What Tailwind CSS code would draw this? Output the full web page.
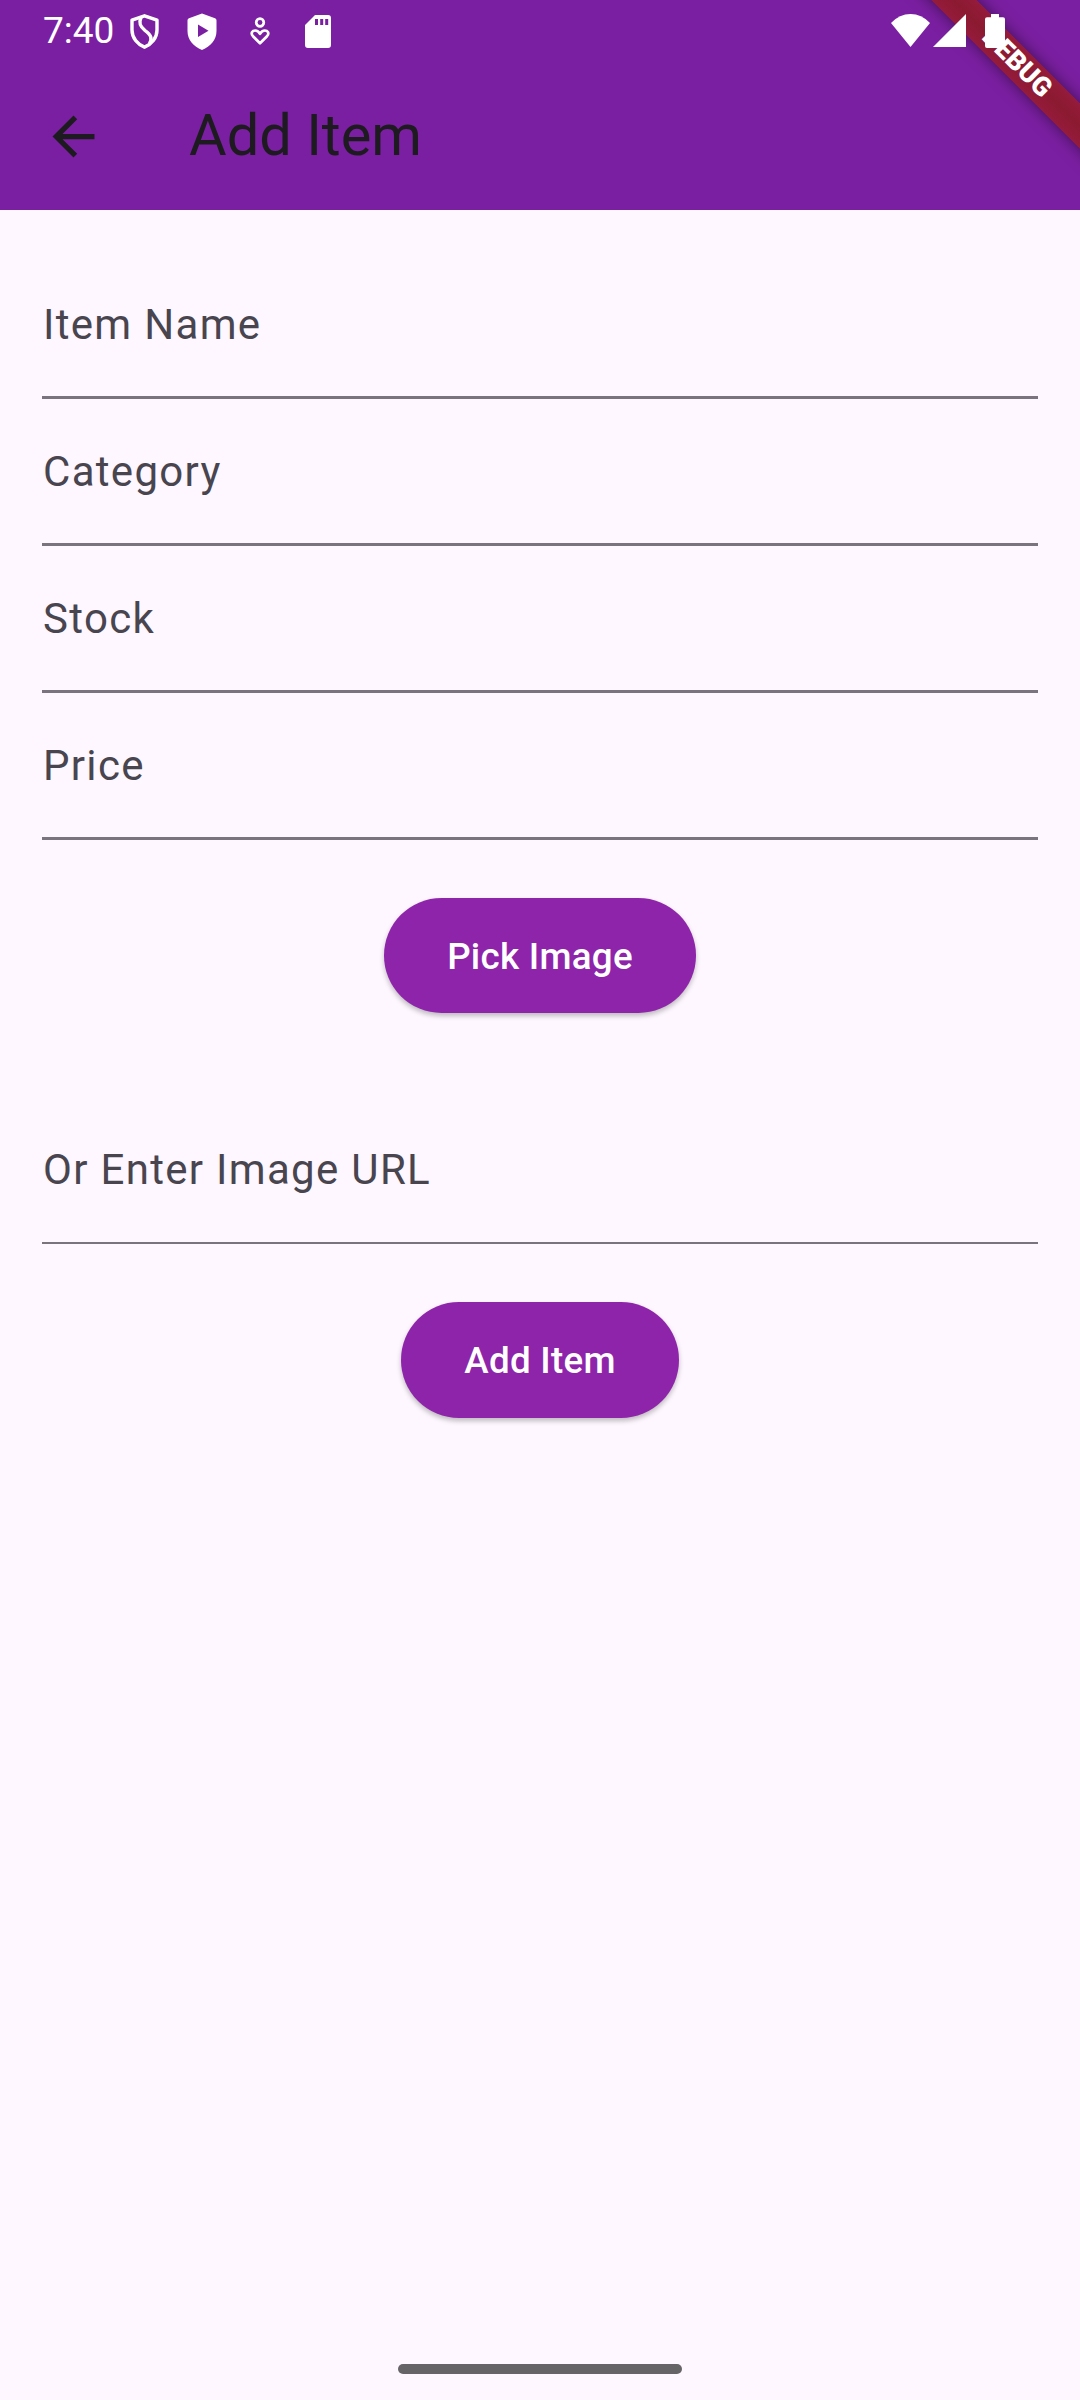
<!DOCTYPE html>
<html lang="en">
<head>
<meta charset="utf-8">
<title>Add Item</title>
<script src="https://cdn.jsdelivr.net/npm/@tailwindcss/browser@4"></script>
</head>
<body class="bg-[#fef7ff]">
<div class="relative flex h-[2400px] w-[1080px] flex-col overflow-hidden bg-[#fef7ff] font-['Roboto',sans-serif]">
  <header class="relative h-[210px] overflow-hidden bg-[#7b1fa2]">
    <!-- debug ribbon -->
    <div class="absolute left-[817.25px] top-[47px] flex h-[31.5px] w-[400px] rotate-45 items-center justify-center bg-linear-to-b from-[#951b3c] via-[#8b1a30] to-[#951b3c] text-[26.8px] leading-none font-black text-white shadow-[0_0_15.75px_rgba(0,0,0,0.5)]">DEBUG</div>
    <!-- status bar -->
    <div class="relative flex h-[63px] items-start pl-[43px] text-white">
      <span class="mt-[9px] w-[87px] text-[37px] leading-[44px]">7:40</span>
      <svg class="mt-[13px] h-[37px] w-[30px]" viewBox="0 0 30 37" fill="none" stroke="currentColor" stroke-width="3.4" stroke-linejoin="round"><path d="M14.5 2.8 L27 7.2 V17 C27 25 21.5 31.5 14.5 34.2 C7.500 31.5 2 25 2 17 V7.200 Z"/><path d="M11 4.500 C8.500 10 10 13.500 15 17.500 C21 22 22.500 25 19.500 30.500"/></svg>
      <svg class="mt-[13px] ml-[27px] h-[38px] w-[30px]" viewBox="0 0 30 38" fill="currentColor"><path fill-rule="evenodd" d="M15 .5 L28 5.200 Q29.500 5.800 29.500 7.500 V18 C29.500 27 23.500 33.500 15 37 C6.500 33.500 .5 27 .5 18 V7.500 Q.5 5.800 2 5.200 Z M11 11.500 V24 L21.500 17.800 Z"/></svg>
      <svg class="mt-[16px] ml-[33px] h-[32px] w-[21px]" viewBox="0 0 21 32" fill="none" stroke="currentColor" stroke-width="2.700"><circle cx="10" cy="6.500" r="3.800"/><path stroke-linejoin="round" d="M10 27.300 L3 20.200 C.2 17 2.500 14.500 5.200 14.500 C7.500 14.500 9 16 10 17.800 C11 16 12.500 14.500 14.800 14.500 C17.500 14.500 19.800 17 17 20.200 Z"/></svg>
      <svg class="mt-[15px] ml-[34px] h-[33px] w-[26px]" viewBox="0 0 26 33" fill="currentColor"><path fill-rule="evenodd" d="M10 0 H23 Q26 0 26 3 V30 Q26 33 23 33 H3 Q0 33 0 30 V10 Z M10 4 V10 H13 V4 Z M15.200 4 V10 H18.200 V4 Z M20.200 4 V10 H23.200 V4 Z"/></svg>
      <svg class="mt-[14px] ml-[560px] h-[33px] w-[39px]" viewBox="0 0 39 33" fill="currentColor"><path d="M0 9 Q8.500 0 19.500 0 Q30.500 0 39 9 L19.500 33 Z"/></svg>
      <svg class="mt-[14px] ml-[3px] h-[33px] w-[33px]" viewBox="0 0 33 33" fill="currentColor"><path d="M0 33 H33 V0 Z"/></svg>
      <svg class="mt-[14px] ml-[19px] h-[34px] w-[20px]" viewBox="0 0 20 34" fill="currentColor"><path d="M6 0 H14 V3.300 H18 Q20 3.300 20 5.300 V32 Q20 34 18 34 H2 Q0 34 0 32 V5.300 Q0 3.300 2 3.300 H6 Z"/></svg>
    </div>
    <!-- toolbar -->
    <div class="relative flex h-[147px] items-center pl-[42px] text-[#1d1b20]">
      <svg class="size-[63px]" viewBox="0 0 24 24" fill="currentColor"><path d="M20 11H7.830l5.590-5.590L12 4l-8 8 8 8 1.410-1.410L7.830 13H20v-2z"/></svg>
      <h1 class="mb-1 ml-[84px] text-[57.75px] leading-[72px]">Add Item</h1>
    </div>
  </header>

  <main class="flex flex-col px-[42px] pt-[42px] text-[42px] tracking-[1.3125px] text-[#49454f]">
    <div class="flex h-[147px] items-center border-b-3 border-[#79747e] pl-px"><label>Item Name</label></div>
    <div class="flex h-[147px] items-center border-b-3 border-[#79747e] pl-px"><label>Category</label></div>
    <div class="flex h-[147px] items-center border-b-3 border-[#79747e] pl-px"><label>Stock</label></div>
    <div class="flex h-[147px] items-center border-b-3 border-[#79747e] pl-px"><label>Price</label></div>
    <button class="mt-[58px] h-[115px] w-[312px] self-center rounded-full bg-[#8e24aa] pt-0.5 text-[36.75px] font-medium tracking-[0.2625px] text-white shadow-[0_3px_5px_rgba(0,0,0,0.25)]">Pick Image</button>
    <div class="mt-[84px] flex h-[147px] items-center border-b-2 border-[#79747e] pl-px"><label>Or Enter Image URL</label></div>
    <button class="mt-[58px] h-[116px] w-[278px] self-center rounded-full bg-[#8e24aa] pt-0.5 text-[36.75px] font-medium tracking-[0.2625px] text-white shadow-[0_3px_5px_rgba(0,0,0,0.25)]">Add Item</button>
  </main>

  <div class="mt-auto mb-[26px] h-[10px] w-[284px] self-center rounded-full bg-[#676468]"></div>
</div>
</body>
</html>
